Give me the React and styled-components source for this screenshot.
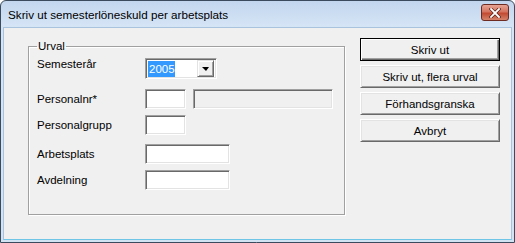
import React from "react";
import styled, { createGlobalStyle, css } from "styled-components";

const Global = createGlobalStyle`
  html, body { margin: 0; padding: 0; background: #ffffff; }
  body { font-family: "Liberation Sans", Arial, sans-serif; font-size: 11px; color: #000; }
  * { box-sizing: border-box; }
`;

const Window = styled.div`
  width: 515px;
  height: 243px;
  border: 1px solid #3b4a5c;
  border-radius: 6px 6px 0 0;
  background: linear-gradient(to bottom, #c2d6ee 0px, #d6e5f6 26px, #d2e3f4 100%);
  display: flex;
  flex-direction: column;
  overflow: hidden;
`;

const TitleBar = styled.div`
  height: 26px;
  display: flex;
  align-items: center;
  justify-content: space-between;
  padding: 0 5px 0 7px;
`;

const Title = styled.span`
  font-family: "Liberation Sans", Arial, sans-serif;
  font-size: 11.7px;
  color: #000;
  padding-top: 1px;
`;

const CloseButton = styled.div`
  width: 28px;
  height: 17px;
  margin-top: -3px;
  border: 1px solid #6d2b22;
  border-radius: 3px;
  background: linear-gradient(to bottom, #e8a493 0%, #d47460 45%, #c24a33 55%, #d5836b 100%);
  display: flex;
  align-items: center;
  justify-content: center;
`;

const Client = styled.div`
  flex: 1;
  margin: 0 2px 2px 2px;
  border: 1px solid #a9c3df;
  border-bottom-color: #6ec5e6;
  background: #f0f0f0;
  display: flex;
  padding: 11px 0 0 24px;
`;

const GroupBox = styled.fieldset`
  width: 317px;
  height: 176px;
  margin: 0;
  padding: 0 0 0 8px;
  border: 1px solid #a0a0a0;
  box-shadow: 1px 1px 0 #ffffff, inset 1px 1px 0 #ffffff;
`;

const Legend = styled.legend`
  padding: 0 1px;
  margin-left: 0;
  font-size: 11.5px;
  line-height: 14px;
`;

const Row = styled.div`
  display: flex;
  align-items: ${(p) => (p.$top ? "flex-start" : "center")};
  margin-top: ${(p) => p.$mt}px;
`;

const Label = styled.div`
  width: 108px;
  font-size: 11.5px;
  padding-top: ${(p) => p.$pt || 0}px;
`;

const sunken = css`
  border: 1px solid;
  border-color: #a0a0a0 #ffffff #ffffff #a0a0a0;
  box-shadow: inset 1px 1px 0 #696969, inset -1px -1px 0 #e3e3e3;
`;

const Input = styled.div`
  ${sunken};
  width: ${(p) => p.$w}px;
  height: 20px;
  margin-left: ${(p) => p.$ml || 0}px;
  background: ${(p) => (p.$disabled ? "#f0f0f0" : "#ffffff")};
`;

const Combo = styled.div`
  ${sunken};
  width: 72px;
  height: 21px;
  background: #ffffff;
  display: flex;
  align-items: center;
  padding: 2px 2px 2px 2px;
`;

const ComboText = styled.span`
  flex: 1;
  display: flex;
  font-size: 11.5px;
`;

const Selected = styled.span`
  background: #3399ff;
  color: #ffffff;
  padding: 1px 0 1px 1px;
  line-height: 14px;
`;

const DropButton = styled.div`
  width: 17px;
  height: 17px;
  background: #f0f0f0;
  border: 1px solid;
  border-color: #e3e3e3 #696969 #696969 #e3e3e3;
  box-shadow: inset 1px 1px 0 #ffffff, inset -1px -1px 0 #a0a0a0;
  display: flex;
  align-items: center;
  justify-content: center;
`;

const Arrow = styled.div`
  width: 0;
  height: 0;
  border-left: 4px solid transparent;
  border-right: 3px solid transparent;
  border-top: 4px solid #000;
  margin-top: 1px;
`;

const ButtonColumn = styled.div`
  display: flex;
  flex-direction: column;
  gap: 4px;
  margin-left: 15px;
  margin-top: -1px;
`;

const Button = styled.div`
  width: 140px;
  height: 23px;
  background: #f0f0f0;
  display: flex;
  align-items: center;
  justify-content: center;
  font-size: 11.5px;
  border: 1px solid;
  ${(p) =>
    p.$default
      ? css`
          border-color: #000000;
          box-shadow: inset 1px 1px 0 #ffffff, inset -1px -1px 0 #696969, inset -2px -2px 0 #a0a0a0;
        `
      : css`
          border-color: #ffffff #696969 #696969 #ffffff;
          box-shadow: inset 1px 1px 0 #e3e3e3, inset -1px -1px 0 #a0a0a0;
        `}
`;

export default function App() {
  return (
    <>
      <Global />
      <Window>
        <TitleBar>
          <Title>Skriv ut semesterlöneskuld per arbetsplats</Title>
          <CloseButton>
            <svg width="12" height="10" viewBox="0 0 12 10">
              <path d="M2 1 L10 9 M10 1 L2 9" stroke="#5a1e14" strokeWidth="3.2" strokeLinecap="square" />
              <path d="M2 1 L10 9 M10 1 L2 9" stroke="#ffffff" strokeWidth="1.8" strokeLinecap="square" />
            </svg>
          </CloseButton>
        </TitleBar>
        <Client>
          <GroupBox>
            <Legend>Urval</Legend>
            <Row $top $mt={5}>
              <Label $pt={0}>Semesterår</Label>
              <Combo>
                <ComboText>
                  <Selected>2005</Selected>
                </ComboText>
                <DropButton>
                  <Arrow />
                </DropButton>
              </Combo>
            </Row>
            <Row $mt={10}>
              <Label>Personalnr*</Label>
              <Input $w={41} />
              <Input $w={140} $ml={7} $disabled />
            </Row>
            <Row $mt={6}>
              <Label>Personalgrupp</Label>
              <Input $w={41} />
            </Row>
            <Row $mt={9}>
              <Label>Arbetsplats</Label>
              <Input $w={85} />
            </Row>
            <Row $mt={6}>
              <Label>Avdelning</Label>
              <Input $w={85} />
            </Row>
          </GroupBox>
          <ButtonColumn>
            <Button $default>Skriv ut</Button>
            <Button>Skriv ut, flera urval</Button>
            <Button>Förhandsgranska</Button>
            <Button>Avbryt</Button>
          </ButtonColumn>
        </Client>
      </Window>
    </>
  );
}
